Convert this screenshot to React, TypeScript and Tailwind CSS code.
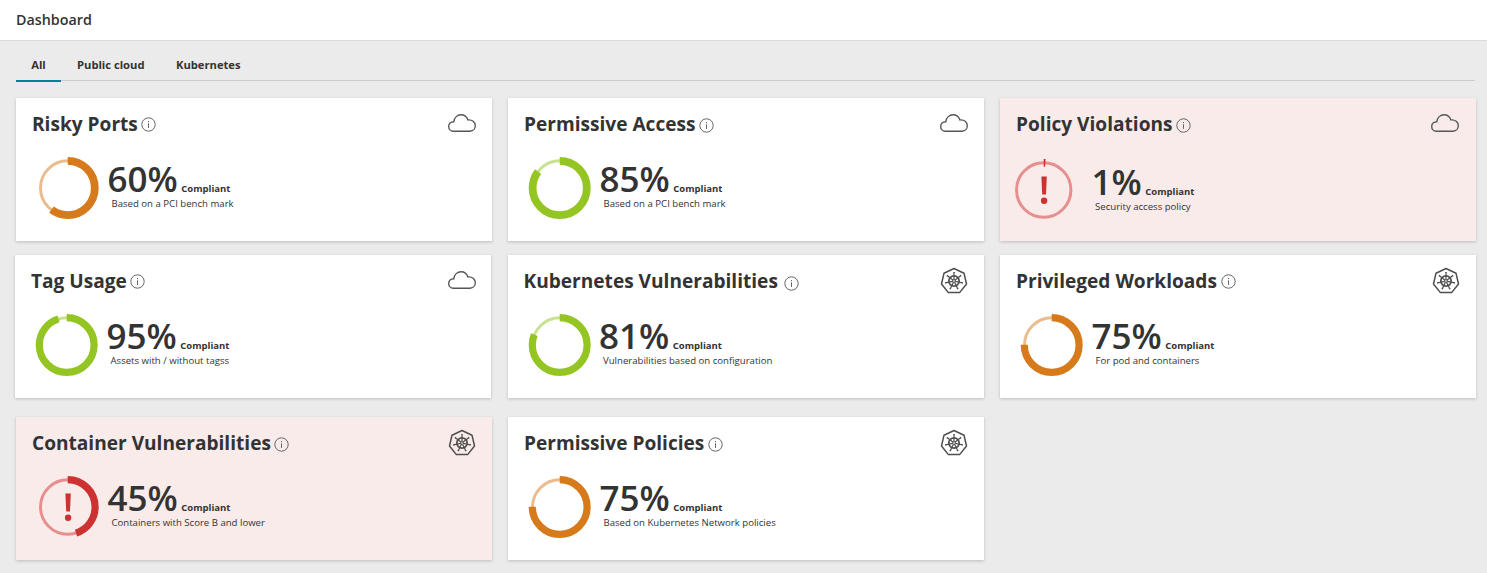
import React from "react";

type Tone = "orange" | "green" | "red";
type Metric = {
  title: string;
  value: number;
  note: string;
  tone: Tone;
  icon: "cloud" | "kube";
  info?: string;
  body?: string;
  text?: string;
  thin?: boolean;
  caption?: string;
  iconPad?: string;
};

const tones: Record<Tone, { main: string; track: string }> = {
  orange: { main: "#d67a1b", track: "#ebbc8d" },
  green: { main: "#94c522", track: "#c9e290" },
  red: { main: "#cd3232", track: "#e68f8f" },
};

function Donut({ value, tone, thin }: { value: number; tone: Tone; thin?: boolean }) {
  const r = thin ? 27.4 : 27.1;
  const w = thin ? 7.2 : 7.8;
  const c = 2 * Math.PI * r;
  const t = tones[tone];
  return (
    <svg viewBox="0 0 63 62" className="h-[62px] w-[63px] shrink-0">
      <circle cx="31.7" cy="31" r="27.2" fill="none" stroke={t.track} strokeWidth="3" />
      <circle cx="31.7" cy="31" r={r} fill="none" stroke={t.main} strokeWidth={w} strokeDasharray={`${(c * value) / 100} ${c}`} transform="rotate(-90 31.7 31)" />
      {tone === "red" && (
        <g fill={t.main}>
          <path d="M29.4 17.5h5.4l-.8 18h-3.8z" />
          <circle cx="32.1" cy="41.8" r="3.2" />
        </g>
      )}
    </svg>
  );
}

function Info() {
  return (
    <svg viewBox="0 0 15 15" className="size-[15px]" fill="none" stroke="#666" strokeWidth="1">
      <circle cx="7.5" cy="7.5" r="6.7" />
      <path d="M7.5 6.3v4.6M7.5 4v1.2" />
    </svg>
  );
}

function Cloud() {
  return (
    <svg viewBox="0 0 28 18" className="mt-4 h-[18px] w-7" fill="none" stroke="#555" strokeWidth="1.4">
      <path d="M5.2 17.2C2.7 17.2.7 15.2.7 12.5S2.7 7.7 5.8 7.7C6.4 3.7 9.3.8 13.1.8c3.4 0 5.7 1.9 6.8 5.1 4.2-.5 7.4 2.2 7.4 5.7 0 3.3-2.3 5.6-5.2 5.6z" />
    </svg>
  );
}

const angles = [0, 1, 2, 3, 4, 5, 6].map((i) => (i * 360) / 7);

function Kube() {
  return (
    <svg viewBox="0 0 28 28" className="mt-3 size-7" fill="none" stroke="#4f4f4f">
      <path d="M14 1.5 24 6.2 26.5 17 19.6 25.6H8.4L1.5 17 4 6.2z" strokeWidth="1.5" strokeLinejoin="round" />
      <circle cx="14" cy="14" r="5.2" strokeWidth="1.7" />
      <circle cx="14" cy="14" r="1.4" strokeWidth="1" />
      {angles.map((a) => (
        <path key={a} d="M14 12.5V5.5M13.2 5.5h1.6" strokeWidth="1.2" transform={`rotate(${a} 14 14)`} />
      ))}
    </svg>
  );
}

function Card({ m }: { m: Metric }) {
  return (
    <section className={`flex h-[143px] w-[476px] flex-col pl-4 shadow-[0_1px_3px_rgba(0,0,0,0.2)] ${m.tone === "red" ? "bg-[#f9ebea]" : "bg-white"}`}>
      <header className={`flex h-[52px] justify-between ${m.iconPad ?? "pr-4"}`}>
        <div className="flex items-start">
          <h2 className="mt-3 text-[19.1px] leading-7 font-bold whitespace-nowrap">{m.title}</h2>
          <span className={m.info ?? "mt-[20px] ml-[3px]"}>
            <Info />
          </span>
        </div>
        {m.icon === "cloud" ? <Cloud /> : <Kube />}
      </header>
      <div className={`flex ${m.body ?? "mt-[7px] ml-1"}`}>
        <Donut value={m.value} tone={m.tone} thin={m.thin} />
        <div className={m.text ?? "ml-[8.5px]"}>
          <p className="mt-1 flex h-9 items-baseline gap-[3.5px]">
            <span className="text-[35px] leading-9 font-semibold">{m.value}%</span>
            <span className="text-[9.5px] leading-3 font-bold">Compliant</span>
          </p>
          <p className={`text-[9.6px] leading-[14px] whitespace-nowrap ${m.caption ?? "ml-1"}`}>{m.note}</p>
        </div>
      </div>
    </section>
  );
}

const rows: { className: string; items: Metric[] }[] = [
  {
    className: "gap-4 pl-4",
    items: [
      { title: "Risky Ports", value: 60, note: "Based on a PCI bench mark", tone: "orange", icon: "cloud", info: "mt-[19px] ml-[3px]" },
      { title: "Permissive Access", value: 85, note: "Based on a PCI bench mark", tone: "green", icon: "cloud" },
      { title: "Policy Violations", value: 1, note: "Security access policy", tone: "red", icon: "cloud", body: "mt-[9px] ml-[-4px]", text: "mt-px ml-[16.5px]", caption: "ml-[3.5px]", iconPad: "pr-[17px]" },
    ],
  },
  {
    className: "mt-[14px] gap-[16.5px] pl-[15px]",
    items: [
      { title: "Tag Usage", value: 95, note: "Assets with / without tagss", tone: "green", icon: "cloud", info: "mt-[19px] ml-[3px]", thin: true, iconPad: "pr-[15px]" },
      { title: "Kubernetes Vulnerabilities", value: 81, note: "Vulnerabilities based on configuration", tone: "green", icon: "kube", info: "mt-[21px] ml-[6px]", thin: true },
      { title: "Privileged Workloads", value: 75, note: "For pod and containers", tone: "orange", icon: "kube", info: "mt-[19px] ml-1", thin: true },
    ],
  },
  {
    className: "mt-[19px] gap-4 pl-4",
    items: [
      { title: "Container Vulnerabilities", value: 45, note: "Containers with Score B and lower", tone: "red", icon: "kube", info: "mt-[20px] ml-[3.5px]", thin: true },
      { title: "Permissive Policies", value: 75, note: "Based on Kubernetes Network policies", tone: "orange", icon: "kube", info: "mt-[20px] ml-1", thin: true },
    ],
  },
];

export default function App() {
  return (
    <div className="h-[573px] w-[1487px] overflow-hidden bg-[#ebebeb] font-['Open_Sans',sans-serif] text-[#333]">
      <header className="flex h-[41px] items-center border-b border-[#dadada] bg-white pb-px pl-4 text-[14.3px] font-semibold">Dashboard</header>
      <nav className="mr-3 ml-4 flex h-10 border-b border-[#cccccc] text-[11.2px] font-bold">
        <button className="h-[41px] w-[45px] border-b-2 border-[#00829b] pt-[9px]">All</button>
        <button className="ml-4 h-[39px] pt-[9px]">Public cloud</button>
        <button className="ml-[31.5px] h-[39px] pt-[9px]">Kubernetes</button>
      </nav>
      <main className="pt-[17px]">
        {rows.map((row, i) => (
          <div key={i} className={`flex ${row.className}`}>
            {row.items.map((m) => (
              <Card key={m.title} m={m} />
            ))}
          </div>
        ))}
      </main>
    </div>
  );
}
